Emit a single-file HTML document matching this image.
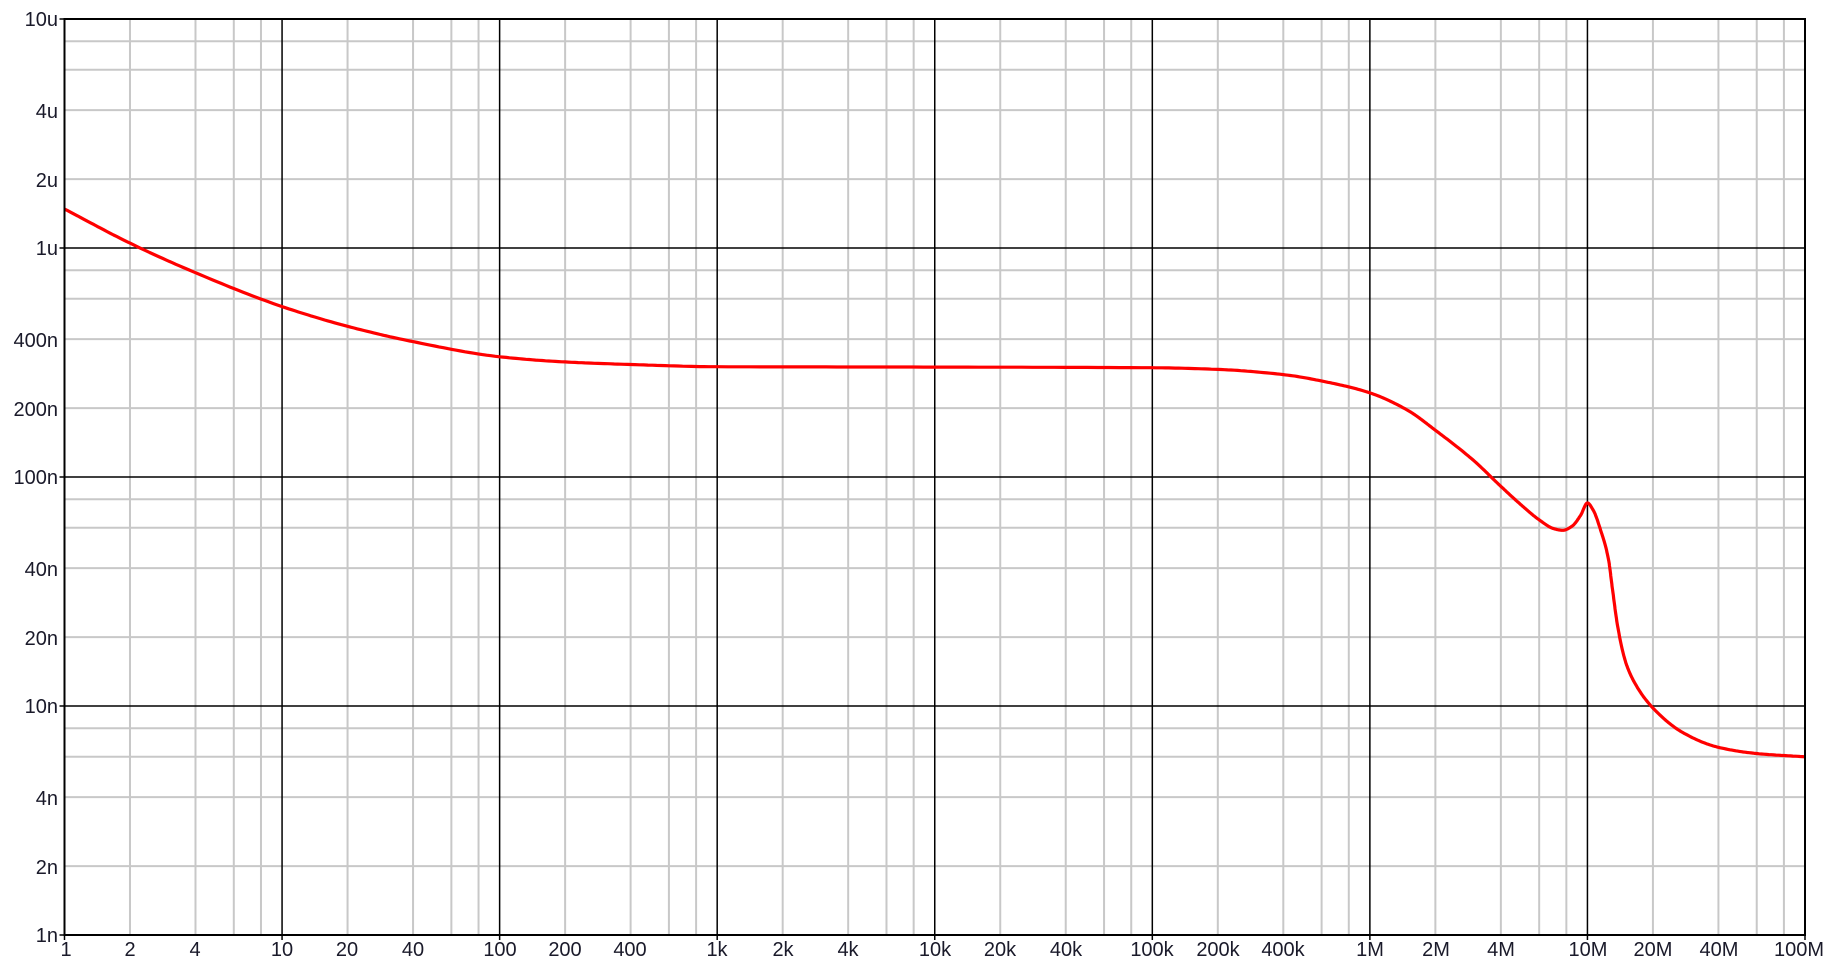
<!DOCTYPE html>
<html><head><meta charset="utf-8"><style>
html,body{margin:0;padding:0;background:#fff;width:1840px;height:967px;overflow:hidden}
svg{display:block}
text{font-family:"Liberation Sans",Arial,sans-serif;font-size:20px;fill:#1a1a2a}
</style></head><body>
<svg id="s" width="1840" height="967" viewBox="0 0 1840 967">
<g id="grid"></g>
<path id="curve" fill="none" stroke="#ff0000" stroke-width="3.2" stroke-linejoin="round"/>
<rect x="64.5" y="19" width="1740.5" height="916" fill="none" stroke="#000" stroke-width="2"/>
<g text-anchor="end">
<text x="58" y="26">10u</text>
<text x="58" y="118">4u</text>
<text x="58" y="187">2u</text>
<text x="58" y="255">1u</text>
<text x="58" y="347">400n</text>
<text x="58" y="416">200n</text>
<text x="58" y="484">100n</text>
<text x="58" y="576">40n</text>
<text x="58" y="645">20n</text>
<text x="58" y="713">10n</text>
<text x="58" y="805">4n</text>
<text x="58" y="874">2n</text>
<text x="58" y="942">1n</text>
</g>
<g text-anchor="middle">
<text x="66" y="956">1</text>
<text x="130" y="956">2</text>
<text x="195" y="956">4</text>
<text x="282" y="956">10</text>
<text x="347" y="956">20</text>
<text x="413" y="956">40</text>
<text x="500" y="956">100</text>
<text x="565" y="956">200</text>
<text x="630" y="956">400</text>
<text x="717" y="956">1k</text>
<text x="783" y="956">2k</text>
<text x="848" y="956">4k</text>
<text x="935" y="956">10k</text>
<text x="1000" y="956">20k</text>
<text x="1066" y="956">40k</text>
<text x="1152" y="956">100k</text>
<text x="1218" y="956">200k</text>
<text x="1283" y="956">400k</text>
<text x="1370" y="956">1M</text>
<text x="1436" y="956">2M</text>
<text x="1501" y="956">4M</text>
<text x="1588" y="956">10M</text>
<text x="1653" y="956">20M</text>
<text x="1719" y="956">40M</text>
<text x="1799" y="956">100M</text>
</g>
</svg>
<script>
var X0=64.5,X1=1805,Y0=19,Y1=935,DX=(X1-X0)/8,DY=(Y1-Y0)/4;
function fx(f){return X0+Math.log10(f)*DX}
function fy(v){return Y0+(1-Math.log10(v))*DY}
var g=document.getElementById('grid'),h='';
var m=[2,4,6,8];
for(var d=0;d<8;d++){for(var i=0;i<4;i++){var x=fx(Math.pow(10,d)*m[i]);h+='<line x1="'+x+'" y1="'+Y0+'" x2="'+x+'" y2="'+Y1+'" stroke="#c8c8c8" stroke-width="2"/>';}}
for(var d=0;d<4;d++){for(var i=0;i<4;i++){var y=fy(Math.pow(10,-3+d)*m[i]);h+='<line x1="'+X0+'" y1="'+y+'" x2="'+X1+'" y2="'+y+'" stroke="#c8c8c8" stroke-width="2"/>';}}
for(var d=1;d<8;d++){var x=fx(Math.pow(10,d));h+='<line x1="'+x+'" y1="'+Y0+'" x2="'+x+'" y2="'+Y1+'" stroke="#000" stroke-width="1.5"/>';}
for(var d=1;d<4;d++){var y=Y0+d*DY;h+='<line x1="'+X0+'" y1="'+y+'" x2="'+X1+'" y2="'+y+'" stroke="#000" stroke-width="1.5"/>';}
for(var d=0;d<=8;d++){var x=fx(Math.pow(10,d));h+='<line x1="'+x+'" y1="'+Y1+'" x2="'+x+'" y2="'+(Y1+5)+'" stroke="#000" stroke-width="1.5"/>';}
for(var d=0;d<=4;d++){var y=Y0+d*DY;h+='<line x1="'+(X0-5)+'" y1="'+y+'" x2="'+X0+'" y2="'+y+'" stroke="#000" stroke-width="1.5"/>';}
g.innerHTML=h;
var P=[[1,1.48],[2,1.05],[4,0.78],[10,0.555],[20,0.455],[40,0.39],[100,0.335],[200,0.318],[400,0.31],[1e3,0.303],[1e4,0.302],[1e5,0.3],[2e5,0.295],[4e5,0.28],[6.57e5,0.258],[1e6,0.233],[1.5e6,0.195],[2e6,0.16],[3e6,0.118],[4e6,0.091],[5e6,0.075],[6e6,0.065],[7e6,0.0595],[7.7e6,0.0585],[8.5e6,0.061],[9.3e6,0.068],[1e7,0.077],[1.06e7,0.072],[1.15e7,0.0586],[1.25e7,0.0436],[1.3e7,0.033],[1.38e7,0.022],[1.5e7,0.0155],[1.65e7,0.0126],[2e7,0.0098],[2.78e7,0.0076],[4e7,0.0066],[6e7,0.0062],[1e8,0.006]];
var xs=P.map(function(p){return Math.log10(p[0])}),ys=P.map(function(p){return Math.log10(p[1])});
var n=xs.length,dl=[],ms=[];
for(var i=0;i<n-1;i++)dl.push((ys[i+1]-ys[i])/(xs[i+1]-xs[i]));
ms[0]=dl[0];ms[n-1]=dl[n-2];
for(var i=1;i<n-1;i++){if(dl[i-1]*dl[i]<=0)ms[i]=0;else{var w1=2*(xs[i+1]-xs[i])+(xs[i]-xs[i-1]),w2=(xs[i+1]-xs[i])+2*(xs[i]-xs[i-1]);ms[i]=(w1+w2)/(w1/dl[i-1]+w2/dl[i]);}}
var pts=[];
for(var i=0;i<n-1;i++){var hh=xs[i+1]-xs[i];for(var k=0;k<20;k++){var t=k/20,t2=t*t,t3=t2*t;
var y=(2*t3-3*t2+1)*ys[i]+(t3-2*t2+t)*hh*ms[i]+(-2*t3+3*t2)*ys[i+1]+(t3-t2)*hh*ms[i+1];
var x=xs[i]+t*hh;pts.push((X0+x*DX).toFixed(1)+','+(Y0+(1-y)*DY).toFixed(1));}}
pts.push(X1+','+fy(0.006).toFixed(1));
document.getElementById('curve').setAttribute('d','M'+pts.join('L'));
</script>
</body></html>
